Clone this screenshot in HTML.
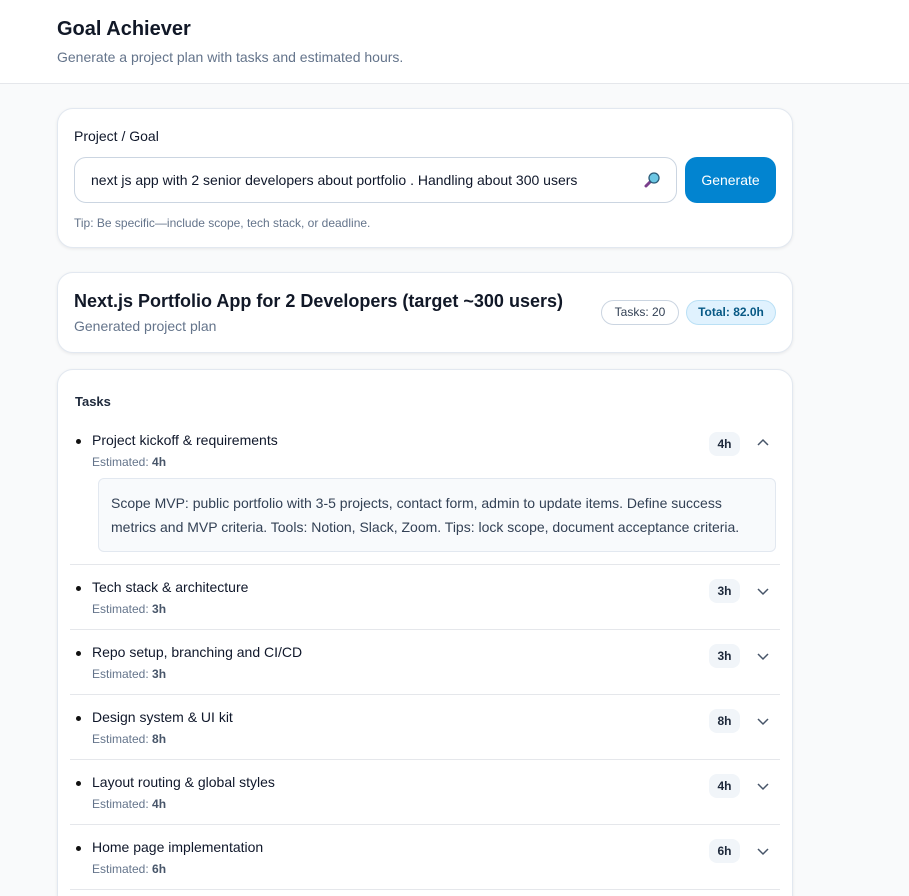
<!DOCTYPE html>
<html><head><style>
*{box-sizing:border-box;margin:0;padding:0}
html,body{width:909px;height:896px;overflow:hidden}
body{background:#f9fafb;font-family:"Liberation Sans",sans-serif;color:#0f172a;position:relative}
.hdr{height:84px;background:#fff;border-bottom:1px solid #e5e7eb;padding:17px 0 0 57px}
.hdr h1{font-size:20px;font-weight:700;color:#111827;line-height:24px}
.hdr p{font-size:14px;color:#64748b;margin-top:8px}
.card{position:absolute;left:57px;width:736px;background:#fff;border:1px solid #e2e8f0;border-radius:16px;box-shadow:0 1px 3px rgba(0,0,0,.08)}
.lbl{position:absolute;left:16px;top:19px;font-size:14px}
.inp{position:absolute;left:16px;top:48px;width:603px;height:46px;border:1px solid #cbd5e1;border-radius:12px;font-size:14px;padding:14px 0 0 16px}
.btn{position:absolute;left:627px;top:48px;width:91px;height:46px;background:#0284d0;border-radius:12px;color:#fff;font-size:14px;text-align:center;line-height:46px}
.tip{position:absolute;left:16px;top:107px;font-size:12px;color:#64748b}
.pill{position:absolute;top:27px;height:25px;border-radius:13px;font-size:12px;line-height:23px;text-align:center}
.row{position:absolute;left:12px;width:710px;border-bottom:1px solid #e5e7eb;height:65px}
.row .t{position:absolute;left:22px;top:14px;font-size:14px}
.row .t:before{content:"";position:absolute;left:-16px;top:7px;width:5px;height:5px;border-radius:50%;background:#111}
.row .e{position:absolute;left:22px;top:37px;font-size:12px;color:#64748b}
.row .e b{color:#475569}
.h{position:absolute;left:639px;top:14px;width:31px;height:24px;background:#f1f5f9;border-radius:8px;font-size:12px;font-weight:700;text-align:center;line-height:24px;color:#1e293b}
.ch{position:absolute;left:686px;top:21px}
</style></head><body>
<div class="hdr"><h1>Goal Achiever</h1><p>Generate a project plan with tasks and estimated hours.</p></div>
<div class="card" style="top:108px;height:140px">
<div class="lbl">Project / Goal</div>
<div class="inp">next js app with 2 senior developers about portfolio . Handling about 300 users
<svg style="position:absolute;left:568px;top:13px" width="18" height="18" viewBox="0 0 18 18"><line x1="3" y1="15" x2="8" y2="10" stroke="#7b3f8c" stroke-width="3" stroke-linecap="round"/><circle cx="11" cy="7" r="5" fill="#6cc7e4" stroke="#2c5c78" stroke-width="1.3"/></svg></div>
<div class="btn">Generate</div>
<div class="tip">Tip: Be specific—include scope, tech stack, or deadline.</div>
</div>
<div class="card" style="top:272px;height:81px">
<div style="position:absolute;left:16px;top:18px;font-size:18px;font-weight:700;color:#111827">Next.js Portfolio App for 2 Developers (target ~300 users)</div>
<div style="position:absolute;left:16px;top:45px;font-size:14px;color:#64748b">Generated project plan</div>
<div class="pill" style="left:543px;width:78px;border:1px solid #cbd5e1;color:#334155">Tasks: 20</div>
<div class="pill" style="left:628px;width:90px;border:1px solid #bae0f5;background:#e0f2fe;color:#075985;font-weight:700">Total: 82.0h</div>
</div>
<div class="card" style="top:369px;height:600px">
<div style="position:absolute;left:17px;top:24px;font-size:13px;font-weight:700;color:#1e293b">Tasks</div>
<div class="row" style="top:52px;height:143px"><div class="t" style="top:10px">Project kickoff &amp; requirements</div><div class="e" style="top:33px">Estimated: <b>4h</b></div><div class="h" style="top:10px">4h</div>
<svg class="ch" style="top:15px" width="14" height="10" viewBox="0 0 14 10"><path d="M2 8L7 3L12 8" fill="none" stroke="#475569" stroke-width="1.5"/></svg>
<div style="position:absolute;left:28px;top:56px;width:678px;height:74px;background:#f8fafc;border:1px solid #e2e8f0;border-radius:6px;font-size:14px;line-height:24px;color:#334155;padding:12px 24px 0 12px">Scope MVP: public portfolio with 3-5 projects, contact form, admin to update items. Define success metrics and MVP criteria. Tools: Notion, Slack, Zoom. Tips: lock scope, document acceptance criteria.</div></div>
<div class="row" style="top:195px"><div class="t">Tech stack &amp; architecture</div><div class="e">Estimated: <b>3h</b></div><div class="h">3h</div><svg class="ch" width="14" height="10" viewBox="0 0 14 10"><path d="M2 3L7 8L12 3" fill="none" stroke="#475569" stroke-width="1.5"/></svg></div>
<div class="row" style="top:260px"><div class="t">Repo setup, branching and CI/CD</div><div class="e">Estimated: <b>3h</b></div><div class="h">3h</div><svg class="ch" width="14" height="10" viewBox="0 0 14 10"><path d="M2 3L7 8L12 3" fill="none" stroke="#475569" stroke-width="1.5"/></svg></div>
<div class="row" style="top:325px"><div class="t">Design system &amp; UI kit</div><div class="e">Estimated: <b>8h</b></div><div class="h">8h</div><svg class="ch" width="14" height="10" viewBox="0 0 14 10"><path d="M2 3L7 8L12 3" fill="none" stroke="#475569" stroke-width="1.5"/></svg></div>
<div class="row" style="top:390px"><div class="t">Layout routing &amp; global styles</div><div class="e">Estimated: <b>4h</b></div><div class="h">4h</div><svg class="ch" width="14" height="10" viewBox="0 0 14 10"><path d="M2 3L7 8L12 3" fill="none" stroke="#475569" stroke-width="1.5"/></svg></div>
<div class="row" style="top:455px"><div class="t">Home page implementation</div><div class="e">Estimated: <b>6h</b></div><div class="h">6h</div><svg class="ch" width="14" height="10" viewBox="0 0 14 10"><path d="M2 3L7 8L12 3" fill="none" stroke="#475569" stroke-width="1.5"/></svg></div>
</div>
</body></html>
